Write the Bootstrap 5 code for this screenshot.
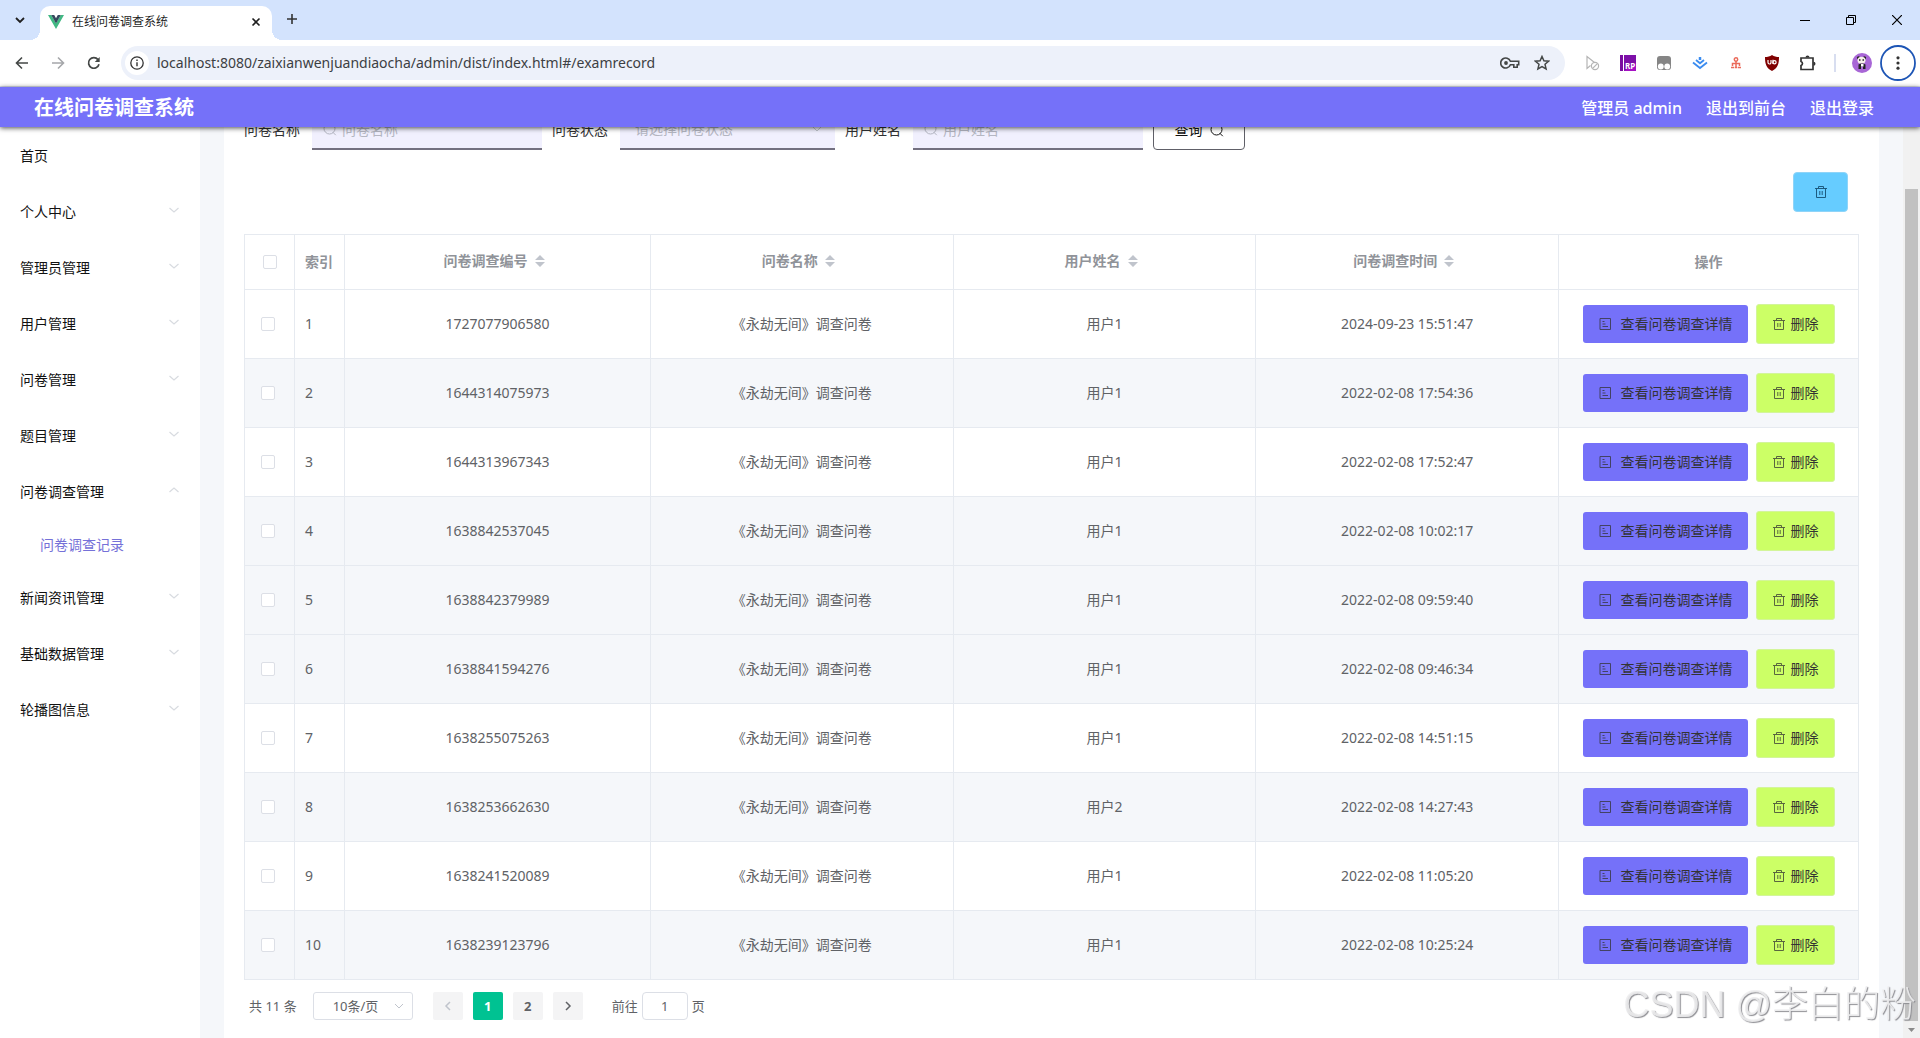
<!DOCTYPE html>
<html lang="zh-CN">
<head>
<meta charset="utf-8">
<meta name="viewport" content="width=device-width, initial-scale=1">
<title>在线问卷调查系统</title>
<link href="https://cdn.jsdelivr.net/npm/bootstrap@5.3.0/dist/css/bootstrap.min.css" rel="stylesheet">
<style>
  :root { --brand: #7571f9; --ink: #606266; --rule: #e6eaf0; --strip: #f5f7fa; }
  body { font-family: "Noto Sans", "Noto Sans CJK SC", sans-serif; font-size: 14px; line-height: 20px; color: #303133; background: #fff; }
  svg { display: block; flex: none; }
  button { font-family: inherit; }

  /* browser frame */
  .tabstrip { height: 40px; background: #d3e3fd; padding-left: 6px; }
  .tab-menu { width: 28px; height: 28px; border-radius: 10px; background: #e9f0fe; }
  .tab-active { position: relative; width: 232px; height: 34px; margin-left: 6px; padding: 0 8px 2px; background: #fff; border-radius: 10px 10px 0 0; font-size: 12px; color: #1f1f1f; }
  .tab-active::before, .tab-active::after { content: ""; position: absolute; bottom: 0; width: 10px; height: 10px; }
  .tab-active::before { left: -10px; background: radial-gradient(circle at 0 0, #d3e3fd 10px, #fff 10px); }
  .tab-active::after { right: -10px; background: radial-gradient(circle at 100% 0, #d3e3fd 10px, #fff 10px); }
  .plain-btn { border: 0; background: none; padding: 0; display: flex; align-items: center; justify-content: center; }
  .tab-close { width: 16px; height: 16px; }
  .tab-add { width: 40px; height: 34px; }
  .win-btn { width: 46px; height: 32px; }
  .toolstrip { height: 47px; padding: 0 4px; border-bottom: 1px solid #dde3ee; }
  .tool-btn { width: 36px; height: 36px; }
  .omnibox { height: 34px; margin: 0 9px; padding: 0 7px 0 4px; border-radius: 17px; background: #edf1fa; }
  .info-dot { width: 24px; height: 24px; border-radius: 50%; background: #fff; }
  .url-field { font-size: 14px; line-height: 20px; color: #3c4043; border: 0; background: none; outline: 0; padding: 0; margin-left: 8px; }
  .tool-sep { width: 18px; height: 18px; }
  .tool-sep::after { content: ""; display: block; width: 2px; height: 18px; margin: 0 auto; background: #d8def0; }
  .omni-icon { width: 32px; height: 32px; }

  /* app header */
  .app-head { position: relative; z-index: 5; height: 40px; padding: 2px 46px 0 34px; background: var(--brand); color: #fff; box-shadow: 0 1px 5px rgba(0,0,0,.7); }
  .app-head h1 { font-size: 20px; line-height: 24px; font-weight: 700; }
  .app-head a, .app-head span { font-size: 16px; line-height: 24px; font-weight: 500; color: #fff; text-decoration: none; }
  .head-links { gap: 24px; }

  /* side menu */
  .side { width: 200px; flex: none; padding-top: 1px; }
  .side a { display: flex; align-items: center; justify-content: space-between; height: 56px; padding: 0 20px; color: #111; text-decoration: none; }
  .side a svg { color: #d8dbe0; margin-bottom: 4px; }
  .side a.sub-item { height: 50px; padding-left: 40px; color: #7571d8; }

  /* content */
  .app-body { min-height: 0; overflow: hidden; }
  .content-wrap { background: var(--strip); padding: 0 24px; min-width: 0; }
  .sheet { background: #fff; padding: 0 20px; height: 100%; }
  .filters { gap: 10px; margin-top: -17px; }
  .filters label { margin-right: 12px; }
  .field-box { position: relative; }
  .field-box svg { position: absolute; left: 11px; top: 12px; color: #b4b6c2; }
  .line-field { height: 40px; border: 0; border-bottom: 2px solid #737080; border-radius: 0; background-color: #f1f0fe; font-size: 14px; line-height: 20px; color: #303133; padding: 0 30px; width: 230px; }
  .line-field::placeholder { color: #b4b6c2; }
  select.line-field { width: 215px; padding: 0 30px 0 15px; color: #b4b6c2; }
  .chev-select { background-image: url("data:image/svg+xml,%3Csvg xmlns='http://www.w3.org/2000/svg' viewBox='0 0 12 12' fill='none' stroke='%23c0c4cc'%3E%3Cpath d='M2 4l4 4 4-4'/%3E%3C/svg%3E"); background-size: 12px 12px; background-position: right 12px center; background-repeat: no-repeat; }
  .query-btn { width: 92px; height: 40px; gap: 7px; border: 1px solid #606068; border-radius: 4px; background: #fff; color: #111; font-size: 14px; }
  .bulk-row { padding: 22px 11px 22px 0; }
  .bulk-btn { width: 55px; height: 40px; border: 1px solid #8fd4f8; border-radius: 4px; background: #66ccff; color: #1d5b80; }

  .grid-table { table-layout: fixed; width: 100%; border-collapse: collapse; color: var(--ink); }
  .col-tick { width: 50px; }
  .col-code { width: 306px; }
  .col-ops { width: 300px; }
  .grid-table th, .grid-table td { border: 1px solid var(--rule); text-align: center; padding: 0 10px; vertical-align: middle; }
  .grid-table th { height: 55px; color: #909399; font-weight: 700; }
  .grid-table td { height: 69px; }
  .grid-table tr.tinted td { background: var(--strip); }
  .grid-table .idx { text-align: left; white-space: nowrap; }
  .grid-table .pick { text-align: left; padding-left: 16px; }
  .grid-table th.pick { padding-left: 18px; }
  .grid-table .form-check-input { display: block; width: 14px; height: 14px; margin: 0; border: 1px solid #dcdfe6; border-radius: 2px; }
  .sort-head { display: flex; align-items: center; justify-content: center; padding-bottom: 3px; }
  .sort-head svg { margin: 0 6px; }
  .row-btn { height: 38px; border-radius: 3px; color: #333; font-size: 14px; line-height: 20px; white-space: nowrap; }
  .view-btn { gap: 9px; padding: 0 15px; background: var(--brand); border: 0; }
  .del-btn { height: 40px; gap: 5px; padding: 0 15px; background: #ccff66; border: 1px solid #d3f59a; }
  .row-btn svg { opacity: .75; }

  .pager { padding: 12px 5px 0; font-size: 13px; line-height: 20px; color: var(--ink); }
  .size-select { width: 100px; height: 28px; margin: 0 20px 0 16px; padding: 0 25px 0 19px; border: 1px solid #dcdfe6; border-radius: 3px; font-size: 13px; line-height: 20px; color: var(--ink); background-position: right 7px center; }
  .page-set { gap: 10px; }
  .page-btn { width: 30px; height: 28px; border: 0; border-radius: 2px; background: #f4f4f5; color: var(--ink); font-size: 13px; font-weight: 700; }
  .page-btn.current { background: #00c292; color: #fff; }
  .page-btn:disabled { color: #c0c4cc; }
  .jump-label { margin-left: 29px; }
  .jump-field { width: 46px; height: 28px; margin: 0 4px; border: 1px solid #dcdfe6; border-radius: 4px; text-align: center; padding: 0; color: var(--ink); font-size: 13px; }

  .scroll-rail { width: 17px; flex: none; background: #f1f1f1; padding-top: 62px; }
  .scroll-thumb { width: 13px; background: #c1c1c1; }
  .stamp { position: fixed; right: 4px; bottom: 9px; z-index: 9; font-family: "Liberation Sans", "Noto Sans CJK SC", sans-serif; font-size: 36px; line-height: 48px; font-weight: 300; color: rgba(238,238,240,.9); text-shadow: 1px 1px 1px #8d8d92; pointer-events: none; white-space: nowrap; }
</style>
<script src="https://cdn.jsdelivr.net/npm/bootstrap@5.3.0/dist/js/bootstrap.bundle.min.js"></script>
</head>
<body class="vh-100 d-flex flex-column overflow-hidden">

<svg width="0" height="0" class="position-absolute" aria-hidden="true">
  <symbol id="i-down" viewBox="0 0 12 12"><path d="M1.500 4l4.500 4 4.500-4" fill="none" stroke="currentColor" stroke-width="1.200"/></symbol>
  <symbol id="i-up" viewBox="0 0 12 12"><path d="M1.500 8l4.500-4 4.500 4" fill="none" stroke="currentColor" stroke-width="1.200"/></symbol>
  <symbol id="i-search" viewBox="0 0 14 14"><circle cx="6.500" cy="6.500" r="5.500" fill="none" stroke="currentColor"/><path d="M9.800 10.200l3 3" fill="none" stroke="currentColor"/></symbol>
  <symbol id="i-trash" viewBox="0 0 14 14"><path d="M1 3.500h12M2.500 3.500v9h9v-9M4.500 3.300V1.500h5v1.800M5.800 6v4M8.200 6v4" fill="none" stroke="currentColor"/></symbol>
  <symbol id="i-doc" viewBox="0 0 14 14"><path d="M2 1.500h10.500v11H2zM4.500 4.500h2M4.500 7h3M4.500 9.500h5.500" fill="none" stroke="currentColor"/></symbol>
  <symbol id="i-sort" viewBox="0 0 12 14"><path d="M1 6l5-5 5 5zM1 8l5 5 5-5z" fill="#c0c4cc"/></symbol>
</svg>

<div class="tabstrip d-flex align-items-end">
  <button class="plain-btn tab-menu mb-auto mt-auto" aria-label="标签页搜索"><svg width="12" height="12" viewBox="0 0 12 12"><path d="M2 4l4 4 4-4" fill="none" stroke="#1f1f1f" stroke-width="1.800"/></svg></button>
  <div class="tab-active d-flex align-items-center">
    <svg width="16" height="16" viewBox="0 0 16 16"><path d="M0 1h3.200L8 9.300 12.800 1H16L8 15z" fill="#41b883"/><path d="M3.200 1h3L8 4.200 9.800 1h3L8 9.400z" fill="#35495e"/></svg>
    <span class="ms-2 me-auto">在线问卷调查系统</span>
    <button class="plain-btn tab-close" aria-label="关闭"><svg width="10" height="10" viewBox="0 0 10 10"><path d="M1.500 1.500l7 7M8.500 1.500l-7 7" stroke="#1f1f1f" stroke-width="1.600"/></svg></button>
  </div>
  <button class="plain-btn tab-add me-auto mb-1" aria-label="新标签页"><svg width="12" height="12" viewBox="0 0 12 12"><path d="M6 1v10M1 6h10" stroke="#333" stroke-width="1.600"/></svg></button>
  <button class="plain-btn win-btn mb-1" aria-label="最小化"><svg width="10" height="10" viewBox="0 0 10 10"><path d="M0 5.500h10" stroke="#000"/></svg></button>
  <button class="plain-btn win-btn mb-1" aria-label="还原"><svg width="10" height="10" viewBox="0 0 10 10"><path d="M.5 2.500h7v7h-7zM2.500 2.500v-2h7v7h-2" fill="none" stroke="#000"/></svg></button>
  <button class="plain-btn win-btn mb-1" aria-label="关闭窗口"><svg width="10" height="10" viewBox="0 0 10 10"><path d="M0 0l10 10M10 0L0 10" stroke="#000" stroke-width="1.200"/></svg></button>
</div>

<div class="toolstrip d-flex align-items-center">
  <button class="plain-btn tool-btn" aria-label="后退"><svg width="14" height="14" viewBox="0 0 14 14"><path d="M13 7H2M7 1.500L1.500 7 7 12.500" fill="none" stroke="#444746" stroke-width="1.600"/></svg></button>
  <button class="plain-btn tool-btn" aria-label="前进"><svg width="14" height="14" viewBox="0 0 14 14"><path d="M1 7h11M7 1.500L12.500 7 7 12.500" fill="none" stroke="#a5a7aa" stroke-width="1.600"/></svg></button>
  <button class="plain-btn tool-btn" aria-label="刷新"><svg width="14" height="14" viewBox="0 0 14 14"><path d="M12 8.200A5.300 5.300 0 1 1 11 3.600" fill="none" stroke="#444746" stroke-width="1.700"/><path d="M12.700 1v5H7.800z" fill="#444746"/></svg></button>
  <div class="omnibox d-flex align-items-center flex-grow-1">
    <span class="info-dot d-flex align-items-center justify-content-center"><svg width="14" height="14" viewBox="0 0 14 14"><circle cx="7" cy="7" r="6.200" fill="none" stroke="#333" stroke-width="1.300"/><path d="M7 6.300v4M7 3.500v1.500" stroke="#333" stroke-width="1.400"/></svg></span>
    <input class="url-field flex-grow-1" type="text" aria-label="地址" value="localhost:8080/zaixianwenjuandiaocha/admin/dist/index.html#/examrecord">
    <button class="plain-btn omni-icon" aria-label="密码"><svg width="20" height="12" viewBox="0 0 20 12"><path d="M10.400 4.300h8.300v3.400h-1.500v2.500h-3.400V7.700h-3.400A5 5 0 1 1 10.400 4.300z" fill="none" stroke="#444746" stroke-width="1.600"/><circle cx="6" cy="6" r="1.900" fill="#444746"/></svg></button>
    <button class="plain-btn omni-icon" aria-label="收藏"><svg width="16" height="16" viewBox="0 0 16 16"><path d="M8 1.500l1.900 4.300 4.700.4-3.600 3.100 1.100 4.600L8 11.500l-4.100 2.400L5 9.300 1.400 6.200l4.700-.4z" fill="none" stroke="#444746" stroke-width="1.500"/></svg></button>
  </div>
  <button class="plain-btn tool-btn" aria-label="扩展一"><svg width="16" height="16" viewBox="0 0 16 16" fill="none" stroke="#b5b5b5" stroke-width="1.200"><path d="M6.500 10.500L3 13.500v-12l7.500 6"/><circle cx="11" cy="11" r="3.600"/><path d="M8.600 13.400l4.800-4.800"/></svg></button>
  <button class="plain-btn tool-btn" aria-label="扩展二"><svg width="16" height="16" viewBox="0 0 16 16"><path d="M0 0h16v16H0z" fill="#a512c4"/><path d="M0 0h3v16H0z" fill="#7a0ca0"/><path d="M3 0h1v16H3z" fill="#fff"/><path d="M4 0h12v8L4 16z" fill="#7d10a8"/><text x="5" y="14" font-size="8" font-weight="700" fill="#fff">RP</text></svg></button>
  <button class="plain-btn tool-btn" aria-label="扩展三"><svg width="16" height="16" viewBox="0 0 16 16"><rect x="1" y="1" width="14" height="14" rx="3" fill="#858585"/><circle cx="4.800" cy="11.500" r="2.900" fill="#fff"/><circle cx="11.200" cy="11.500" r="2.900" fill="#fff"/></svg></button>
  <button class="plain-btn tool-btn" aria-label="扩展四"><svg width="16" height="16" viewBox="0 0 16 16" fill="none" stroke="#3b8cf0" stroke-width="1.800"><path d="M1 7.500l7 5.500 7-5.500M4 5l4 3.300L12 5"/><path d="M8 2v3" stroke-width="2.500"/></svg></button>
  <button class="plain-btn tool-btn" aria-label="扩展五"><svg width="12" height="12" viewBox="0 0 12 12" fill="none" stroke="#ea6a5a" stroke-width="1.500"><circle cx="6" cy="2.500" r="1.700"/><path d="M6 4v7M2.500 9V6.500h7V9M1 10.500h3M4.700 10.500h2.600M8 10.500h3"/></svg></button>
  <button class="plain-btn tool-btn" aria-label="扩展六"><svg width="16" height="16" viewBox="0 0 16 16"><path d="M8 0c2 1.500 4.500 2 7 2 0 6.500-1 11-7 14C2 13 1 8.500 1 2c2.500 0 5-.5 7-2z" fill="#800000"/><path d="M4 5v2.500a1.500 1.500 0 0 0 3 0V5M9 4.700v4.300" fill="none" stroke="#fff" stroke-width="1.200"/><circle cx="10.500" cy="7.200" r="1.600" fill="none" stroke="#fff" stroke-width="1.200"/></svg></button>
  <button class="plain-btn tool-btn" aria-label="扩展程序"><svg width="18" height="18" viewBox="0 0 18 18"><path d="M2 4h12v11.500H2v-4a2.100 2.100 0 0 0 0-4z" fill="none" stroke="#333" stroke-width="1.700"/><path d="M6.500 3.500a2 2 0 0 1 4 0zM14.500 7.700a2 2 0 0 1 0 4z" fill="#333"/></svg></button>
  <span class="tool-sep"></span>
  <button class="plain-btn tool-btn" aria-label="用户"><svg width="20" height="20" viewBox="0 0 20 20"><circle cx="10" cy="10" r="10" fill="#a866d6"/><circle cx="6.500" cy="4.800" r="1.600" fill="#222"/><circle cx="12.500" cy="4.800" r="1.600" fill="#222"/><ellipse cx="9.500" cy="7.300" rx="4" ry="3.500" fill="#f6f0ea"/><path d="M7 7h1.500M10.500 7H12" stroke="#222" stroke-width="1.400"/><path d="M6.500 11.500c2-1.500 5-1.500 7 0V16h-2.500v-2.500h-2V16H6.500z" fill="#222"/><path d="M9 11h2.500v2.500H9z" fill="#fff"/></svg></button>
  <button class="plain-btn tool-btn" aria-label="菜单"><svg width="36" height="36" viewBox="0 0 36 36"><circle cx="18" cy="18" r="17" fill="none" stroke="#1d55b5" stroke-width="1.800"/><circle cx="18" cy="12.800" r="1.600" fill="#333"/><circle cx="18" cy="18" r="1.600" fill="#333"/><circle cx="18" cy="23.200" r="1.600" fill="#333"/></svg></button>
</div>

<header class="app-head d-flex align-items-center justify-content-between flex-shrink-0">
  <h1 class="m-0">在线问卷调查系统</h1>
  <nav class="head-links d-flex"><span>管理员 admin</span><a href="#">退出到前台</a><a href="#">退出登录</a></nav>
</header>

<div class="app-body d-flex flex-grow-1">
  <nav class="side d-flex flex-column" aria-label="主菜单">
    <a href="#">首页</a>
    <a href="#">个人中心<svg width="12" height="12"><use href="#i-down"/></svg></a>
    <a href="#">管理员管理<svg width="12" height="12"><use href="#i-down"/></svg></a>
    <a href="#">用户管理<svg width="12" height="12"><use href="#i-down"/></svg></a>
    <a href="#">问卷管理<svg width="12" height="12"><use href="#i-down"/></svg></a>
    <a href="#">题目管理<svg width="12" height="12"><use href="#i-down"/></svg></a>
    <a href="#">问卷调查管理<svg width="12" height="12"><use href="#i-up"/></svg></a>
    <a href="#" class="sub-item">问卷调查记录</a>
    <a href="#">新闻资讯管理<svg width="12" height="12"><use href="#i-down"/></svg></a>
    <a href="#">基础数据管理<svg width="12" height="12"><use href="#i-down"/></svg></a>
    <a href="#">轮播图信息<svg width="12" height="12"><use href="#i-down"/></svg></a>
  </nav>

  <main class="content-wrap flex-grow-1">
    <div class="sheet d-flow-root">
      <div class="overflow-hidden">
      <form class="filters d-flex">
        <div class="d-flex align-items-center"><label for="f-name">问卷名称</label><div class="field-box"><svg width="14" height="14"><use href="#i-search"/></svg><input id="f-name" class="line-field" type="text" placeholder="问卷名称"></div></div>
        <div class="d-flex align-items-center"><label for="f-state">问卷状态</label><select id="f-state" class="line-field chev-select form-select"><option>请选择问卷状态</option></select></div>
        <div class="d-flex align-items-center"><label for="f-user">用户姓名</label><div class="field-box"><svg width="14" height="14"><use href="#i-search"/></svg><input id="f-user" class="line-field" type="text" placeholder="用户姓名"></div></div>
        <button type="button" class="query-btn d-flex align-items-center justify-content-center">查询<svg width="14" height="14"><use href="#i-search"/></svg></button>
      </form>
      </div>
      <div class="bulk-row d-flex justify-content-end">
        <button type="button" class="bulk-btn d-flex align-items-center justify-content-center" aria-label="批量删除"><svg width="14" height="14"><use href="#i-trash"/></svg></button>
      </div>
      <table class="grid-table">
        <colgroup><col class="col-tick"><col class="col-tick"><col class="col-code"><col><col><col><col class="col-ops"></colgroup>
        <thead>
          <tr>
            <th class="pick"><input type="checkbox" class="form-check-input" aria-label="全选"></th>
            <th class="idx">索引</th>
            <th><div class="sort-head">问卷调查编号<svg width="12" height="14"><use href="#i-sort"/></svg></div></th>
            <th><div class="sort-head">问卷名称<svg width="12" height="14"><use href="#i-sort"/></svg></div></th>
            <th><div class="sort-head">用户姓名<svg width="12" height="14"><use href="#i-sort"/></svg></div></th>
            <th><div class="sort-head">问卷调查时间<svg width="12" height="14"><use href="#i-sort"/></svg></div></th>
            <th>操作</th>
          </tr>
        </thead>
        <tbody id="records"></tbody>
      </table>
      <div class="pager d-flex align-items-center">
        <span>共 11 条</span>
        <select class="size-select chev-select form-select" aria-label="每页条数"><option>10条/页</option></select>
        <div class="page-set d-flex">
          <button class="page-btn d-flex align-items-center justify-content-center" disabled aria-label="上一页"><svg width="12" height="12" viewBox="0 0 12 12"><path d="M8 2L4 6l4 4" fill="none" stroke="currentColor" stroke-width="1.500"/></svg></button>
          <button class="page-btn current">1</button>
          <button class="page-btn">2</button>
          <button class="page-btn d-flex align-items-center justify-content-center" aria-label="下一页"><svg width="12" height="12" viewBox="0 0 12 12"><path d="M4 2l4 4-4 4" fill="none" stroke="currentColor" stroke-width="1.500"/></svg></button>
        </div>
        <label for="f-jump" class="jump-label">前往</label>
        <input id="f-jump" class="jump-field" type="text" value="1">
        <span>页</span>
      </div>
    </div>
  </main>

  <div class="scroll-rail d-flex flex-column align-items-center" aria-hidden="true">
    <div class="scroll-thumb flex-grow-1"></div>
    <svg width="17" height="17" viewBox="0 0 17 17"><path d="M5 7h7l-3.500 4z" fill="#8a8a8a"/></svg>
  </div>
</div>
<div class="stamp">CSDN @李白的粉</div>

<script>
  const records = [
    ["1727077906580", "用户1", "2024-09-23 15:51:47"],
    ["1644314075973", "用户1", "2022-02-08 17:54:36"],
    ["1644313967343", "用户1", "2022-02-08 17:52:47"],
    ["1638842537045", "用户1", "2022-02-08 10:02:17"],
    ["1638842379989", "用户1", "2022-02-08 09:59:40"],
    ["1638841594276", "用户1", "2022-02-08 09:46:34"],
    ["1638255075263", "用户1", "2022-02-08 14:51:15"],
    ["1638253662630", "用户2", "2022-02-08 14:27:43"],
    ["1638241520089", "用户1", "2022-02-08 11:05:20"],
    ["1638239123796", "用户1", "2022-02-08 10:25:24"]
  ];
  const hovered = 5;
  document.getElementById("records").innerHTML = records.map(([id, user, time], i) => {
    const n = i + 1;
    return `<tr class="${n % 2 === 0 || n === hovered ? "tinted" : ""}">
      <td class="pick"><input type="checkbox" class="form-check-input" aria-label="选择第${n}行"></td>
      <td class="idx">${n}</td><td>${id}</td><td>《永劫无间》调查问卷</td><td>${user}</td><td>${time}</td>
      <td><div class="d-flex justify-content-center align-items-center gap-2">
        <button type="button" class="row-btn view-btn d-flex align-items-center"><svg width="14" height="14"><use href="#i-doc"/></svg>查看问卷调查详情</button>
        <button type="button" class="row-btn del-btn d-flex align-items-center"><svg width="14" height="14"><use href="#i-trash"/></svg>删除</button>
      </div></td></tr>`;
  }).join("");
</script>
</body>
</html>
